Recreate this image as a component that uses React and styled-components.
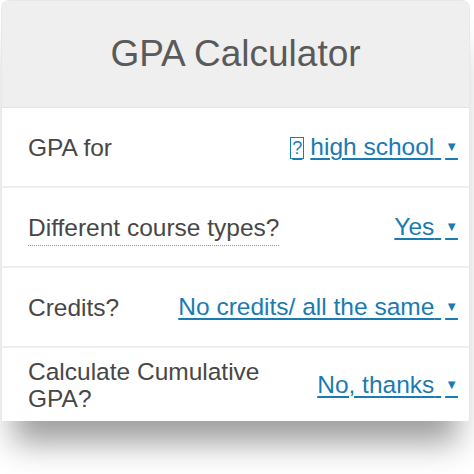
import React from "react";
import styled, { createGlobalStyle } from "styled-components";

const Global = createGlobalStyle`
  html, body {
    margin: 0;
    padding: 0;
    background: #ffffff;
  }
  body {
    font-family: "Liberation Sans", Arial, sans-serif;
  }
`;

const Page = styled.div`
  width: 474px;
  height: 474px;
  overflow: hidden;
  padding: 0 4px 0 1px;
  box-sizing: border-box;
`;

const Card = styled.div`
  background: #ffffff;
  border-radius: 8px 8px 0 0;
  border: 1px solid #e8e8e8;
  border-bottom: none;
  box-shadow: 0 34px 30px -12px rgba(0, 0, 0, 0.38);
  overflow: hidden;
`;

const Header = styled.div`
  height: 106px;
  background: #efefef;
  border-bottom: 1px solid #e4e4e4;
  display: flex;
  align-items: center;
  justify-content: center;
`;

const Title = styled.h1`
  margin: 0;
  font-size: 37px;
  font-weight: 400;
  color: #5a5a5a;
`;

const Row = styled.div`
  height: ${({ $h }) => $h}px;
  display: flex;
  align-items: center;
  justify-content: space-between;
  padding: 0 11px 0 26px;
  border-bottom: ${({ $last }) => ($last ? "none" : "2px solid #efefef")};
  box-sizing: border-box;
`;

const Label = styled.span`
  font-size: 24.5px;
  line-height: 27px;
  color: #474747;
  max-width: ${({ $wrap }) => ($wrap ? "270px" : "none")};
  border-bottom: ${({ $dotted }) => ($dotted ? "1.5px dotted #9a9a9a" : "none")};
  padding-bottom: ${({ $dotted }) => ($dotted ? "4px" : "0")};
  margin-top: ${({ $dotted }) => ($dotted ? "6px" : "0")};
`;

const Select = styled.a`
  font-size: 24.5px;
  color: #1a7bb3;
  text-decoration: underline;
  text-underline-offset: 3px;
  text-decoration-thickness: 1.5px;
  white-space: nowrap;
  cursor: pointer;
`;

const Caret = styled.span`
  font-size: 13px;
  margin-left: 4px;
  vertical-align: 4px;
`;

const Missing = styled.span`
  border: 1.5px solid #1a7bb3;
  font-size: 18px;
  padding: 0 1px;
  margin-right: 6px;
  vertical-align: 1px;
`;

const rows = [
  { label: "GPA for", value: "high school", icon: true },
  { label: "Different course types?", value: "Yes", dotted: true },
  { label: "Credits?", value: "No credits/ all the same" },
  { label: "Calculate Cumulative GPA?", value: "No, thanks", wrap: true, last: true },
];

export default function App() {
  return (
    <>
      <Global />
      <Page>
        <Card>
          <Header>
            <Title>GPA Calculator</Title>
          </Header>
          {rows.map((r) => (
            <Row key={r.label} $h={r.last ? 73 : 80} $last={r.last}>
              <Label $dotted={r.dotted} $wrap={r.wrap}>
                {r.label}
              </Label>
              <Select>
                {r.icon && <Missing>?</Missing>}
                {r.value} <Caret>▼</Caret>
              </Select>
            </Row>
          ))}
        </Card>
      </Page>
    </>
  );
}
